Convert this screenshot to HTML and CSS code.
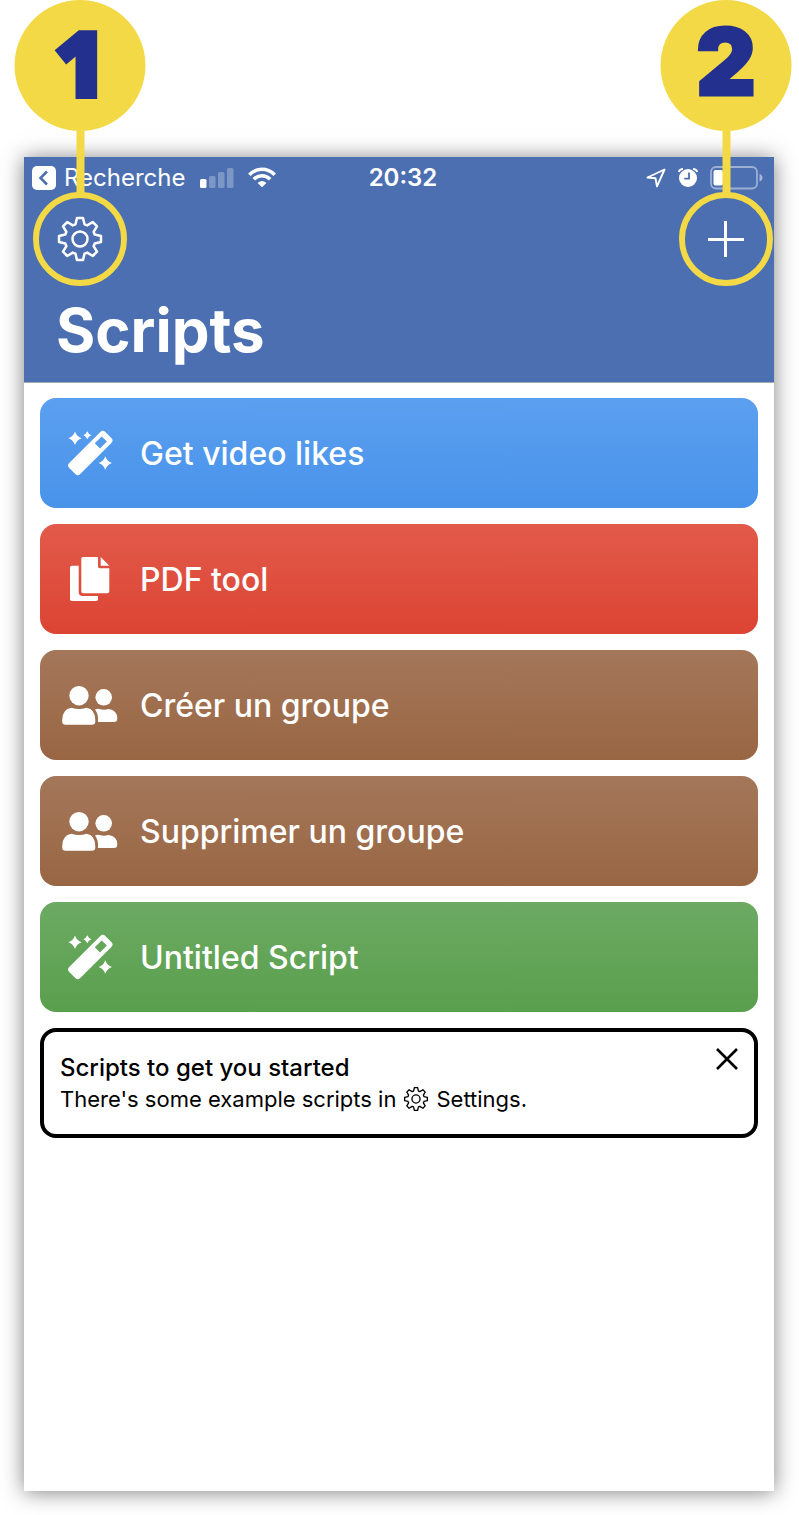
FILE: index.html
```html
<!DOCTYPE html>
<html lang="fr">
<head>
<meta charset="utf-8">
<meta name="viewport" content="width=device-width, initial-scale=1">
<title>Scripts</title>
<link rel="stylesheet" href="styles.css">
</head>
<body>
<svg class="sprite" aria-hidden="true">
  <symbol id="gear" viewBox="-24 -24 48 48">
    <path fill="none" stroke="currentColor" stroke-linejoin="round" d="M-4.5-14.7L-3-21H3L4.5-14.7L7.2-13.6L12.7-17L17-12.7L13.6-7.2L14.7-4.5L21-3V3L14.7 4.5L13.6 7.2L17 12.7L12.7 17L7.2 13.6L4.5 14.7L3 21H-3L-4.5 14.7L-7.2 13.6L-12.7 17L-17 12.7L-13.6 7.2L-14.7 4.5L-21 3V-3L-14.7-4.5L-13.6-7.2L-17-12.7L-12.7-17L-7.2-13.6Z"/>
    <circle r="7.5" fill="none" stroke="currentColor"/>
  </symbol>
  <symbol id="wand" viewBox="0 0 60 60">
    <path fill="currentColor" fill-rule="evenodd" transform="translate(30.3 30) rotate(-45)" d="M-22-7.800H22Q25.500-7.800 25.500-4.300V4.300Q25.500 7.800 22 7.800H-22Q-25.500 7.800-25.500 4.300V-4.300Q-25.500-7.800-22-7.800ZM10-3.700V3.700H19.800V-3.700Z"/>
    <path fill="currentColor" d="M15 8.600Q16.700 13.600 21.700 15.300Q16.700 17 15 22Q13.300 17 8.300 15.300Q13.300 13.600 15 8.600ZM27.300 8.300Q28.400 11.200 31.300 12.300Q28.400 13.400 27.300 16.300Q26.200 13.400 23.300 12.300Q26.200 11.200 27.300 8.300ZM45.300 33.300Q47 38.300 52 40Q47 41.700 45.300 46.700Q43.600 41.700 38.600 40Q43.600 38.300 45.300 33.300Z"/>
  </symbol>
  <symbol id="docs" viewBox="0 0 60 60">
    <path fill="currentColor" d="M23 8H38V17.500Q38 19.300 39.800 19.300H49.300V42.500Q49.300 44.300 47.500 44.300H23Q21.300 44.300 21.300 42.500V9.700Q21.300 8 23 8ZM40.700 8L49.300 16.700H40.700ZM12 16.700H18.700V43Q18.700 47 22.700 47H38V50.300Q38 52 36.300 52H11.700Q10 52 10 50.300V18.500Q10 16.700 12 16.700Z"/>
  </symbol>
  <symbol id="people" viewBox="0 0 60 60">
    <g fill="currentColor">
      <circle cx="19" cy="20.700" r="9.700"/>
      <circle cx="43.700" cy="22.300" r="8.300"/>
      <path d="M11.500 32.700Q19 35.500 26.500 32.700Q35.300 34 35.300 45V46.500Q35.300 49.700 32 49.700H5.500Q2.200 49.700 2.200 46.500V45Q2.200 34 11.500 32.700ZM35 34.500Q37.500 33.300 39.500 34Q44 35.600 48.500 34Q57.300 35 57.300 43.500Q57.300 47 54 47H38Q38.600 39 35 34.500Z"/>
    </g>
  </symbol>
</svg>

<main class="phone">
  <header class="header">
    <div class="status">
      <div class="status-left">
        <svg width="24" height="24" viewBox="0 0 24 24" aria-hidden="true"><rect width="24" height="24" rx="5" fill="#fff"/><path d="M15 5.500L8.500 12L15 18.500" fill="none" stroke="#4c6fb1" stroke-width="2.500"/></svg>
        <a class="back" href="#">Recherche</a>
        <svg class="signal" width="34" height="22" viewBox="0 0 34 22" fill="#fff" aria-hidden="true"><rect y="12" width="6.500" height="9" rx="1.500"/><g opacity=".27"><rect x="9" y="9" width="6.500" height="12" rx="1.500"/><rect x="18" y="5" width="6.500" height="16" rx="1.500"/><rect x="27" y="1" width="6.500" height="20" rx="1.500"/></g></svg>
        <svg width="28" height="22" viewBox="0 0 28 22" aria-hidden="true"><g fill="none" stroke="#fff" stroke-width="3.600"><path d="M1.300 7.700Q7 2.300 14 2.300T26.700 7.700"/><path d="M5.800 12.200Q9.500 8.700 14 8.700T22.200 12.200"/></g><path d="M9.600 16Q14 12.100 18.400 16L14 20.300Z" fill="#fff"/></svg>
      </div>
      <time class="clock">20:32</time>
      <div class="status-right">
        <svg width="20" height="20" viewBox="0 0 20 20" aria-hidden="true"><path d="M1.500 9.500L18.500 1.500L11 18.300L9.500 10.300Z" fill="none" stroke="#fff" stroke-width="1.900" stroke-linejoin="round"/></svg>
        <svg width="20" height="20" viewBox="0 0 20 20" aria-hidden="true"><circle cx="10" cy="10" r="9" fill="#fff"/><path d="M.800 4Q1.600 1.300 5 1.100M19.200 4Q18.400 1.300 15 1.100" fill="none" stroke="#4c6fb1" stroke-width="4"/><path d="M.800 4Q1.600 1.300 5 1.100M19.200 4Q18.400 1.300 15 1.100" fill="none" stroke="#fff" stroke-width="2"/><path d="M11 4.500V10.700H6.300" fill="none" stroke="#4c6fb1" stroke-width="1.800"/></svg>
        <svg width="53" height="24" viewBox="0 0 53 24" aria-hidden="true"><rect x="1" y="1" width="46" height="21.500" rx="5" fill="none" stroke="#fff" stroke-opacity=".45" stroke-width="1.800"/><path d="M49.500 8Q52.500 9 52.500 11.750T49.500 15.500Z" fill="#fff" opacity=".5"/><rect x="3.500" y="4" width="9.500" height="15.500" rx="2" fill="#fff"/></svg>
      </div>
    </div>
    <nav class="toolbar">
      <button class="tool" type="button" aria-label="Settings">
        <svg class="gear" aria-hidden="true"><use href="#gear"/></svg>
        <span class="callout"><span class="bubble bubble-one">1</span><span class="stem"></span></span>
      </button>
      <button class="tool" type="button" aria-label="Add">
        <svg width="36" height="36" viewBox="0 0 36 36" aria-hidden="true"><path d="M17.500 0V36M0 18.500H36" stroke="#fff" stroke-width="3"/></svg>
        <span class="callout"><span class="bubble bubble-two">2</span><span class="stem"></span></span>
      </button>
    </nav>
    <h1 class="title">Scripts</h1>
  </header>

  <section class="list">
    <button class="card blue" type="button"><svg class="icon" aria-hidden="true"><use href="#wand"/></svg>Get video likes</button>
    <button class="card red" type="button"><svg class="icon" aria-hidden="true"><use href="#docs"/></svg>PDF tool</button>
    <button class="card brown" type="button"><svg class="icon" aria-hidden="true"><use href="#people"/></svg>Créer un groupe</button>
    <button class="card brown" type="button"><svg class="icon" aria-hidden="true"><use href="#people"/></svg>Supprimer un groupe</button>
    <button class="card green" type="button"><svg class="icon" aria-hidden="true"><use href="#wand"/></svg>Untitled Script</button>
    <aside class="notice">
      <div>
        <h2 class="notice-title">Scripts to get you started</h2>
        <p class="notice-text">There's some example scripts in <svg class="gear-small" aria-hidden="true"><use href="#gear"/></svg> Settings.</p>
      </div>
      <button class="close" type="button" aria-label="Close"><svg width="22" height="22" viewBox="0 0 22 22" aria-hidden="true"><path d="M1 1L21 21M21 1L1 21" stroke="#000" stroke-width="2.600"/></svg></button>
    </aside>
  </section>
</main>
</body>
</html>
```
FILE: styles.css
```css
* {
  box-sizing: border-box;
}

body {
  margin: 0;
  min-height: 100vh;
  padding: 157px 25px 24px 24px;
  display: flex;
  background: #fff;
  color: #000;
  font-family: Inter, "Liberation Sans", sans-serif;
}

button {
  margin: 0;
  border: 0;
  padding: 0;
  background: none;
  color: inherit;
  font: inherit;
}

svg {
  display: block;
  flex: none;
}

.sprite {
  position: absolute;
  width: 0;
  height: 0;
}

.phone {
  flex: 1;
  background: #fff;
  box-shadow: 0 1px 20px rgba(0, 0, 0, 0.5);
}

.header {
  background: #4c6fb1;
  border-bottom: 1px solid #a3a7b0;
  color: #fff;
  padding-bottom: 8px;
}

.status {
  display: grid;
  grid-template-columns: 1fr auto 1fr;
  align-items: center;
  height: 35px;
  padding: 7px 0 0 8px;
  font-size: 24px;
  line-height: 28px;
}

.status-left,
.status-right {
  display: flex;
  align-items: center;
}

.status-left {
  gap: 8px;
}

.status-right {
  justify-content: flex-end;
  gap: 12px;
  padding-right: 11px;
}

.back {
  color: inherit;
  text-decoration: none;
}

.signal {
  margin: 0 6px;
}

.clock {
  font-weight: 600;
}

.toolbar {
  display: flex;
  justify-content: space-between;
  padding: 0 1px 0 9px;
}

.tool {
  position: relative;
  display: flex;
  align-items: center;
  justify-content: center;
  width: 94px;
  height: 94px;
  border: 6px solid #f3d945;
  border-radius: 50%;
}

.gear {
  width: 48px;
  height: 48px;
  stroke-width: 2.5px;
}

.callout {
  position: absolute;
  bottom: 84px;
  left: 50%;
  display: flex;
  flex-direction: column;
  align-items: center;
  transform: translateX(-50%);
}

.bubble {
  width: 131px;
  height: 131px;
  border-radius: 50%;
  background: #f3d945;
  color: #23308e;
  line-height: 124px;
  text-align: center;
}

.bubble-one {
  font-family: "Open Sans", Inter, sans-serif;
  font-size: 90px;
  font-weight: 800;
  -webkit-text-stroke: 4px #23308e;
}

.bubble-two {
  font-size: 92px;
  font-weight: 900;
  -webkit-text-stroke: 3px #23308e;
}

.stem {
  width: 8px;
  height: 65px;
  background: #f3d945;
}

.title {
  margin: 0;
  padding-left: 32px;
  font-size: 60px;
  font-weight: 700;
  line-height: 88px;
}

.list {
  display: flex;
  flex-direction: column;
  gap: 16px;
  padding: 15px 16px 16px;
}

.card {
  display: flex;
  align-items: center;
  gap: 20px;
  height: 110px;
  padding: 0 20px;
  border-radius: 16px;
  color: #fff;
  font-size: 32px;
  font-weight: 500;
  text-align: left;
}

.icon {
  width: 60px;
  height: 60px;
}

.blue {
  background: linear-gradient(#5b9ff0, #4893ea);
}

.red {
  background: linear-gradient(#e25a4a, #dc4433);
}

.brown {
  background: linear-gradient(#a4775a, #996643);
}

.green {
  background: linear-gradient(#6caa63, #5a9f4d);
}

.notice {
  display: flex;
  justify-content: space-between;
  align-items: flex-start;
  min-height: 110px;
  padding: 16px;
  border: 4px solid #000;
  border-radius: 16px;
}

.notice-title {
  margin: 0;
  padding-top: 4px;
  font-size: 24px;
  font-weight: 500;
  line-height: 31px;
}

.notice-text {
  display: flex;
  align-items: center;
  gap: 7px;
  margin: 0;
  font-size: 22px;
  line-height: 32px;
}

.gear-small {
  width: 26px;
  height: 26px;
  stroke-width: 2.5px;
}
```
